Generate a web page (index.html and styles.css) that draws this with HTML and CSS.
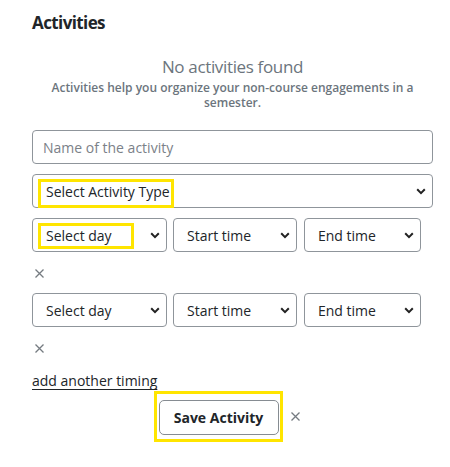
FILE: index.html
```html
<!DOCTYPE html>
<html lang="en">

<head>
  <meta charset="UTF-8">
  <meta name="viewport" content="width=device-width, initial-scale=1.0">
  <title>Activities</title>
  <link rel="stylesheet" href="styles.css">
</head>

<body>
  <section class="activities">
    <h2 class="activities__title">Activities</h2>

    <div class="empty">
      <p class="empty__title">No activities found</p>
      <p class="empty__text">Activities help you organize your non-course engagements in a semester.</p>
    </div>

    <form class="activity-form" autocomplete="off">
      <input class="field" type="text" name="name" placeholder="Name of the activity">

      <div class="marked">
        <select class="field" name="type">
          <option value="" selected>Select Activity Type</option>
          <option value="club">Club</option>
          <option value="sport">Sport</option>
          <option value="volunteer">Volunteering</option>
        </select>
        <span class="mark mark--type"></span>
      </div>

      <div class="timing">
        <div class="timing__row">
          <div class="marked">
            <select class="field timing__day" name="day">
              <option value="" selected>Select day</option>
              <option>Monday</option>
              <option>Tuesday</option>
              <option>Wednesday</option>
            </select>
            <span class="mark mark--day"></span>
          </div>
          <select class="field timing__start" name="start">
            <option value="" selected>Start time</option>
          </select>
          <select class="field timing__end" name="end">
            <option value="" selected>End time</option>
          </select>
        </div>
        <button class="remove" type="button" aria-label="Remove timing">
          <svg width="9" height="9" viewBox="0 0 9 9"><path d="M0.5 0.5l8 8M8.5 0.5l-8 8" /></svg>
        </button>
      </div>

      <div class="timing">
        <div class="timing__row">
          <select class="field timing__day" name="day2">
            <option value="" selected>Select day</option>
            <option>Monday</option>
            <option>Tuesday</option>
            <option>Wednesday</option>
          </select>
          <select class="field timing__start" name="start2">
            <option value="" selected>Start time</option>
          </select>
          <select class="field timing__end" name="end2">
            <option value="" selected>End time</option>
          </select>
        </div>
        <button class="remove" type="button" aria-label="Remove timing">
          <svg width="9" height="9" viewBox="0 0 9 9"><path d="M0.5 0.5l8 8M8.5 0.5l-8 8" /></svg>
        </button>
      </div>

      <a class="add-timing" href="#">add another timing</a>

      <div class="form-actions">
        <span class="highlight">
          <button class="save" type="submit">Save Activity</button>
        </span>
        <button class="remove remove--cancel" type="button" aria-label="Cancel">
          <svg width="9" height="9" viewBox="0 0 9 9"><path d="M0.5 0.5l8 8M8.5 0.5l-8 8" /></svg>
        </button>
      </div>
    </form>
  </section>
</body>

</html>
```

FILE: styles.css
```css
* {
  box-sizing: border-box;
}

body {
  margin: 0;
  background-color: #fff;
  color: #212529;
  font-family: "Open Sans", sans-serif;
  font-size: 14px;
  line-height: 1.4;
}

.activities {
  width: 401px;
  margin-left: 32px;
  padding-top: 11px;
}

.activities__title {
  margin: 0;
  font-size: 17px;
  font-weight: 700;
  line-height: 24px;
  letter-spacing: -0.6px;
}

.empty {
  margin-top: 21px;
  text-align: center;
  color: #6c757d;
}

.empty__title {
  margin: 0;
  font-size: 17px;
  font-weight: 400;
  line-height: 22px;
  letter-spacing: -0.35px;
}

.empty__text {
  margin: 2px 0 0;
  font-size: 12px;
  font-weight: 600;
  line-height: 15px;
}

.activity-form {
  margin-top: 20px;
}

.field {
  display: block;
  width: 100%;
  height: 34px;
  margin: 0 0 10px;
  padding: 0 10px;
  border: 1px solid #8f959b;
  border-radius: 4px;
  outline: none;
  background-color: #fff;
  color: #212529;
  font-family: "Open Sans", sans-serif;
  font-size: 14px;
}

.field::placeholder {
  color: #7b8188;
}

select.field {
  padding: 0 24px 0 13px;
  appearance: none;
  background-image: url("data:image/svg+xml,%3Csvg xmlns='http://www.w3.org/2000/svg' viewBox='0 0 10 7'%3E%3Cpath d='M1.2 1.3l3.8 3.8 3.8-3.8' fill='none' stroke='%23222' stroke-width='2'/%3E%3C/svg%3E");
  background-repeat: no-repeat;
  background-position: right 6px center;
  background-size: 10px 7px;
}

/* yellow frames drawn over the hinted controls */
.marked {
  position: relative;
}

.mark {
  position: absolute;
  border: 3px solid #ffe500;
  pointer-events: none;
}

.mark--type {
  top: 5px;
  left: 6px;
  width: 136px;
  height: 29px;
}

.mark--day {
  top: 5px;
  left: 6px;
  width: 96px;
  height: 26px;
}

.timing__row {
  display: flex;
  gap: 6px;
}

.timing__row .field {
  margin: 0;
}

.timing__day {
  width: 135px;
}

.timing__start {
  width: 124px;
}

.timing__end {
  width: 117px;
  margin-left: 1px !important;
}

.remove {
  display: block;
  margin: 0;
  padding: 0;
  border: none;
  background: none;
  line-height: 0;
  cursor: pointer;
}

.remove svg {
  stroke: #757b81;
  stroke-width: 1.3;
}

.timing .remove {
  margin: 17px 0 15px 3px;
}

.add-timing {
  display: inline-block;
  margin-top: 3px;
  color: #212529;
  font-size: 14px;
  line-height: 20px;
  text-decoration: underline;
  text-underline-offset: 3px;
}

.form-actions {
  display: flex;
  align-items: center;
  justify-content: center;
  gap: 8px;
  padding-right: 12px;
}

.highlight {
  display: inline-block;
  padding: 6px 1px 4px 2px;
  border: 3px solid #ffe500;
}

.save {
  display: block;
  width: 120px;
  height: 35px;
  padding: 0;
  border: 1px solid #868c92;
  border-radius: 5px;
  background-color: #fff;
  color: #212529;
  font-family: "Open Sans", sans-serif;
  font-size: 14px;
  font-weight: 700;
}
```
